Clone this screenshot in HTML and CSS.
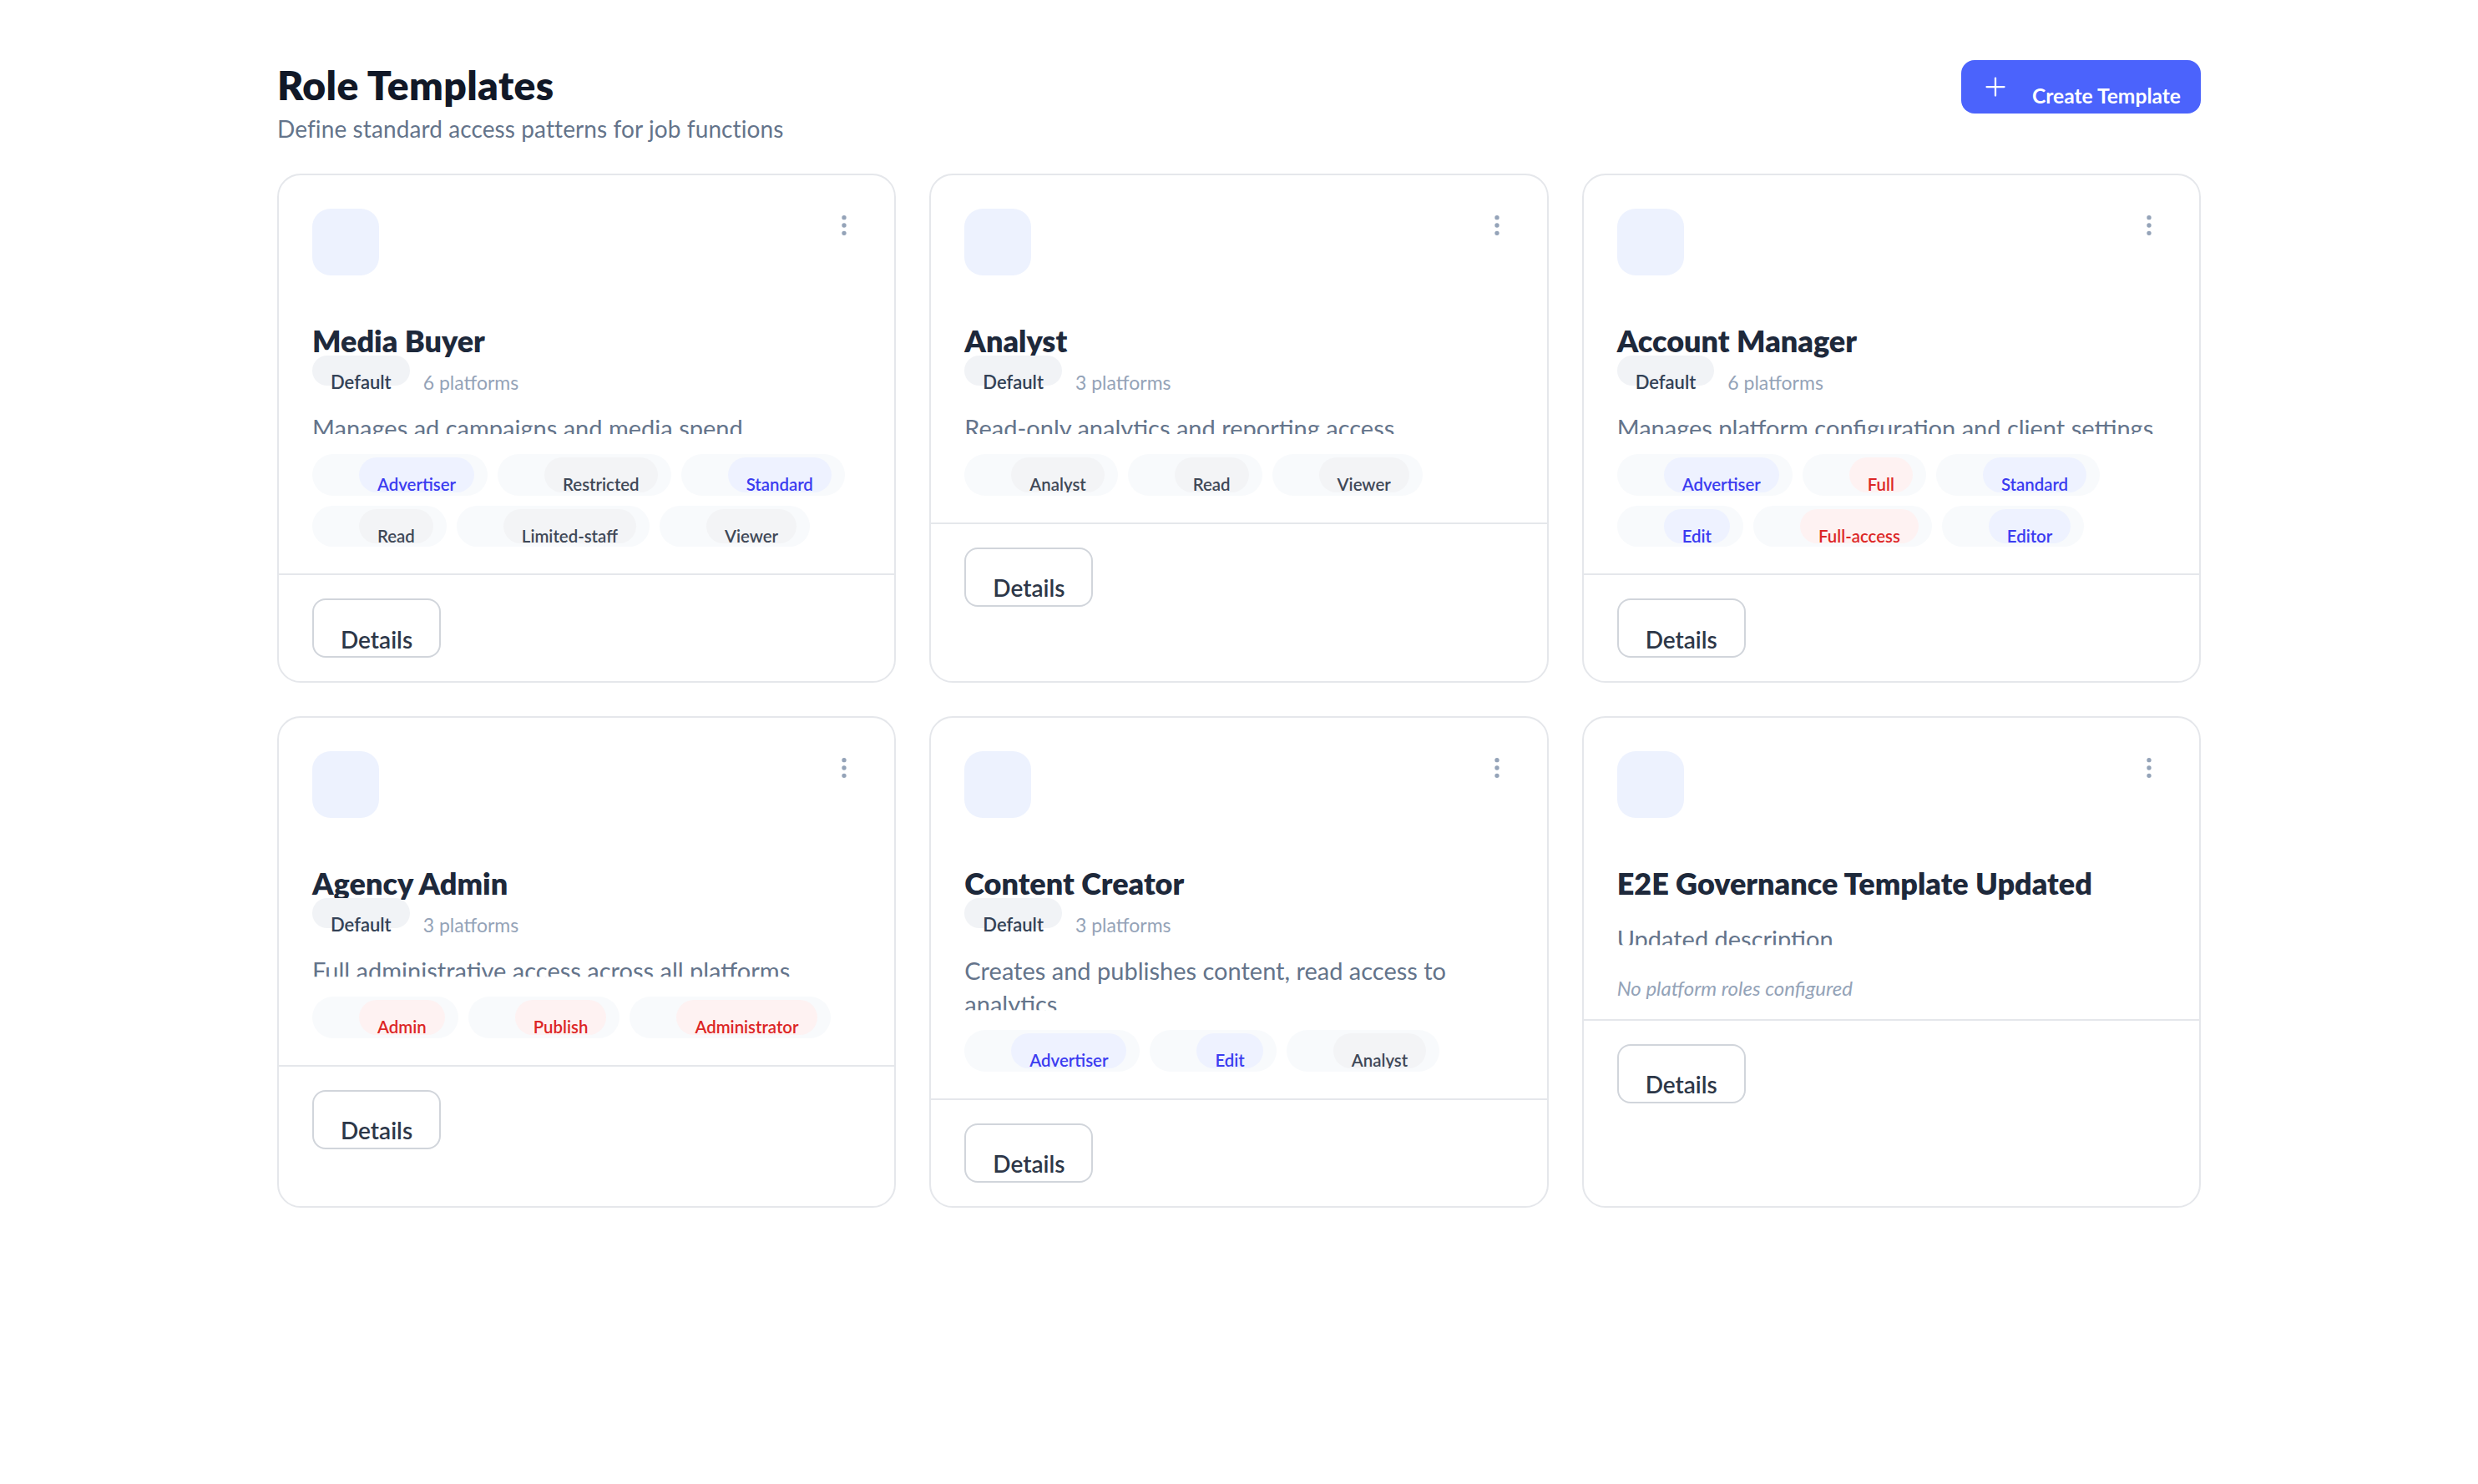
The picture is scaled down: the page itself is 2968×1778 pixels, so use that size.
FILE: index.html
```html
<!DOCTYPE html>
<html lang="en">
<head>
<meta charset="utf-8">
<title>Role Templates</title>
<link rel="stylesheet" href="styles.css">
</head>
<body>
<main class="page">
  <header class="page-header">
    <div class="page-heading">
      <h1 class="page-title">Role Templates</h1>
      <p class="page-subtitle">Define standard access patterns for job functions</p>
    </div>
    <button class="btn-primary" type="button">
      <svg class="btn-icon" viewBox="0 0 24 24" fill="none" stroke="currentColor" stroke-width="1.5" stroke-linecap="round"><path d="M5 12h14"/><path d="M12 5v14"/></svg>
      <span class="btn-label">Create Template</span>
    </button>
  </header>

  <section class="grid">
    <article class="card">
      <div class="card-body">
        <div class="card-top">
          <div class="card-icon"></div>
          <button class="kebab" type="button"><svg viewBox="0 0 24 24" fill="none" stroke="currentColor" stroke-width="2"><circle cx="12" cy="5" r="1"/><circle cx="12" cy="12" r="1"/><circle cx="12" cy="19" r="1"/></svg></button>
        </div>
        <h2 class="card-title">Media Buyer</h2>
        <div class="card-meta"><span class="badge">Default</span><span class="count">6 platforms</span></div>
        <p class="card-desc">Manages ad campaigns and media spend</p>
        <div class="chips">
          <span class="chip"><span class="chip-icon"></span><span class="role role-blue">Advertiser</span></span>
          <span class="chip"><span class="chip-icon"></span><span class="role role-gray">Restricted</span></span>
          <span class="chip"><span class="chip-icon"></span><span class="role role-blue">Standard</span></span>
          <span class="chip"><span class="chip-icon"></span><span class="role role-gray">Read</span></span>
          <span class="chip"><span class="chip-icon"></span><span class="role role-gray">Limited-staff</span></span>
          <span class="chip"><span class="chip-icon"></span><span class="role role-gray">Viewer</span></span>
        </div>
      </div>
      <div class="card-footer"><button class="btn-outline" type="button">Details</button></div>
    </article>

    <article class="card">
      <div class="card-body">
        <div class="card-top">
          <div class="card-icon"></div>
          <button class="kebab" type="button"><svg viewBox="0 0 24 24" fill="none" stroke="currentColor" stroke-width="2"><circle cx="12" cy="5" r="1"/><circle cx="12" cy="12" r="1"/><circle cx="12" cy="19" r="1"/></svg></button>
        </div>
        <h2 class="card-title">Analyst</h2>
        <div class="card-meta"><span class="badge">Default</span><span class="count">3 platforms</span></div>
        <p class="card-desc">Read-only analytics and reporting access</p>
        <div class="chips">
          <span class="chip"><span class="chip-icon"></span><span class="role role-gray">Analyst</span></span>
          <span class="chip"><span class="chip-icon"></span><span class="role role-gray">Read</span></span>
          <span class="chip"><span class="chip-icon"></span><span class="role role-gray">Viewer</span></span>
        </div>
      </div>
      <div class="card-footer"><button class="btn-outline" type="button">Details</button></div>
    </article>

    <article class="card">
      <div class="card-body">
        <div class="card-top">
          <div class="card-icon"></div>
          <button class="kebab" type="button"><svg viewBox="0 0 24 24" fill="none" stroke="currentColor" stroke-width="2"><circle cx="12" cy="5" r="1"/><circle cx="12" cy="12" r="1"/><circle cx="12" cy="19" r="1"/></svg></button>
        </div>
        <h2 class="card-title">Account Manager</h2>
        <div class="card-meta"><span class="badge">Default</span><span class="count">6 platforms</span></div>
        <p class="card-desc">Manages platform configuration and client settings</p>
        <div class="chips">
          <span class="chip"><span class="chip-icon"></span><span class="role role-blue">Advertiser</span></span>
          <span class="chip"><span class="chip-icon"></span><span class="role role-red">Full</span></span>
          <span class="chip"><span class="chip-icon"></span><span class="role role-blue">Standard</span></span>
          <span class="chip"><span class="chip-icon"></span><span class="role role-blue">Edit</span></span>
          <span class="chip"><span class="chip-icon"></span><span class="role role-red">Full-access</span></span>
          <span class="chip"><span class="chip-icon"></span><span class="role role-blue">Editor</span></span>
        </div>
      </div>
      <div class="card-footer"><button class="btn-outline" type="button">Details</button></div>
    </article>

    <article class="card">
      <div class="card-body">
        <div class="card-top">
          <div class="card-icon"></div>
          <button class="kebab" type="button"><svg viewBox="0 0 24 24" fill="none" stroke="currentColor" stroke-width="2"><circle cx="12" cy="5" r="1"/><circle cx="12" cy="12" r="1"/><circle cx="12" cy="19" r="1"/></svg></button>
        </div>
        <h2 class="card-title">Agency Admin</h2>
        <div class="card-meta"><span class="badge">Default</span><span class="count">3 platforms</span></div>
        <p class="card-desc">Full administrative access across all platforms</p>
        <div class="chips">
          <span class="chip"><span class="chip-icon"></span><span class="role role-red">Admin</span></span>
          <span class="chip"><span class="chip-icon"></span><span class="role role-red">Publish</span></span>
          <span class="chip"><span class="chip-icon"></span><span class="role role-red">Administrator</span></span>
        </div>
      </div>
      <div class="card-footer"><button class="btn-outline" type="button">Details</button></div>
    </article>

    <article class="card">
      <div class="card-body">
        <div class="card-top">
          <div class="card-icon"></div>
          <button class="kebab" type="button"><svg viewBox="0 0 24 24" fill="none" stroke="currentColor" stroke-width="2"><circle cx="12" cy="5" r="1"/><circle cx="12" cy="12" r="1"/><circle cx="12" cy="19" r="1"/></svg></button>
        </div>
        <h2 class="card-title">Content Creator</h2>
        <div class="card-meta"><span class="badge">Default</span><span class="count">3 platforms</span></div>
        <p class="card-desc">Creates and publishes content, read access to analytics</p>
        <div class="chips">
          <span class="chip"><span class="chip-icon"></span><span class="role role-blue">Advertiser</span></span>
          <span class="chip"><span class="chip-icon"></span><span class="role role-blue">Edit</span></span>
          <span class="chip"><span class="chip-icon"></span><span class="role role-gray">Analyst</span></span>
        </div>
      </div>
      <div class="card-footer"><button class="btn-outline" type="button">Details</button></div>
    </article>

    <article class="card">
      <div class="card-body">
        <div class="card-top">
          <div class="card-icon"></div>
          <button class="kebab" type="button"><svg viewBox="0 0 24 24" fill="none" stroke="currentColor" stroke-width="2"><circle cx="12" cy="5" r="1"/><circle cx="12" cy="12" r="1"/><circle cx="12" cy="19" r="1"/></svg></button>
        </div>
        <h2 class="card-title">E2E Governance Template Updated</h2>
        <p class="card-desc card-desc-nometa">Updated description</p>
        <p class="empty">No platform roles configured</p>
      </div>
      <div class="card-footer"><button class="btn-outline" type="button">Details</button></div>
    </article>
  </section>
</main>
</body>
</html>
```

FILE: styles.css
```css
html {
  zoom: 2;
}

body {
  margin: 0;
  background: #ffffff;
  font-family: Lato, "Noto Sans", Arial, sans-serif;
  color: #111827;
}

.page {
  max-width: 1152px;
  margin: 0 auto;
  padding-top: 35px;
}

.page-header {
  display: flex;
  justify-content: space-between;
  align-items: flex-start;
  margin-bottom: 17px;
}

.page-title {
  margin: 0;
  font-size: 24px;
  line-height: 32px;
  font-weight: 800;
  letter-spacing: 0.2px;
  color: #111827;
}

.page-subtitle {
  margin: 0;
  font-size: 14px;
  line-height: 20px;
  letter-spacing: 0.05px;
  color: #64748b;
}

.btn-primary {
  display: flex;
  align-items: flex-start;
  box-sizing: border-box;
  height: 32px;
  margin-top: 1px;
  padding: 7px 12px 0 11.5px;
  border: 0;
  border-radius: 8px;
  background: #4b63fc;
  color: #ffffff;
  font-family: inherit;
  cursor: pointer;
}

.btn-icon {
  width: 18px;
  height: 18px;
  flex: none;
}

.btn-label {
  margin-left: 13px;
  padding-top: 6.4px;
  font-size: 12.3px;
  line-height: 16px;
  font-weight: 700;
  white-space: nowrap;
}

.grid {
  display: grid;
  grid-template-columns: repeat(3, 1fr);
  gap: 20px;
}

.card {
  border: 1px solid #e5e7eb;
  border-radius: 14px;
  background: #ffffff;
}

.card-body {
  padding: 20px 20px 16px;
}

.card-top {
  display: flex;
  justify-content: space-between;
  align-items: flex-start;
  height: 40px;
}

.card-icon {
  width: 40px;
  height: 40px;
  border-radius: 11px;
  background: #edf2fe;
}

.kebab {
  display: flex;
  width: 20px;
  height: 20px;
  padding: 2px;
  border: 0;
  background: none;
  color: #94a3b8;
  cursor: pointer;
}

.kebab svg {
  width: 16px;
  height: 16px;
}

.card-title {
  margin: 29px 0 0;
  font-size: 18px;
  line-height: 20px;
  font-weight: 800;
  color: #1e293b;
}

.card-meta {
  display: flex;
  gap: 8px;
  height: 18px;
  margin-top: -1px;
}

.badge {
  box-sizing: border-box;
  height: 18px;
  padding: 8px 11px 0;
  border-radius: 9px;
  background: #f1f3f6;
  font-size: 11px;
  line-height: 16px;
  font-weight: 600;
  color: #334155;
}

.count {
  padding-top: 8px;
  font-size: 11.5px;
  line-height: 16px;
  color: #94a3b8;
}

.card-desc {
  margin: 15.5px 0 0;
  font-size: 14.5px;
  line-height: 20px;
  color: #64748b;
  clip-path: inset(0 0 6.5px 0);
}

.card-desc-nometa {
  margin-top: 13.5px;
}

.chips {
  display: flex;
  flex-wrap: wrap;
  gap: 6px;
  margin-top: 5.6px;
}

.chip {
  display: flex;
  align-items: flex-start;
  gap: 4px;
  padding: 2px 8px;
  border-radius: 999px;
  background: #f8fafc;
}

.chip-icon {
  flex: none;
  width: 16px;
  height: 16px;
}

.role {
  box-sizing: border-box;
  height: 20.8px;
  padding: 9px 11px 0;
  border-radius: 999px;
  overflow: hidden;
  white-space: nowrap;
  font-size: 10.2px;
  line-height: 14px;
  font-weight: 600;
}

.role-blue {
  background: #eef2ff;
  color: #3b3cf0;
}

.role-gray {
  background: #f3f4f6;
  color: #3f4857;
}

.role-red {
  background: #fef2f2;
  color: #dc2626;
}

.empty {
  height: 10.3px;
  margin: 11.5px 0 0;
  font-size: 12px;
  line-height: 16px;
  font-style: italic;
  color: #94a3b8;
}

.card-footer {
  border-top: 1px solid #e5e7eb;
  padding: 14px 20px 14px;
}

.btn-outline {
  display: block;
  box-sizing: border-box;
  height: 35.4px;
  padding: 13px 16px 0;
  border: 1px solid #d1d5db;
  border-radius: 8px;
  background: #ffffff;
  font-family: inherit;
  font-size: 14px;
  line-height: 20px;
  font-weight: 600;
  color: #2d3748;
  cursor: pointer;
}
```
